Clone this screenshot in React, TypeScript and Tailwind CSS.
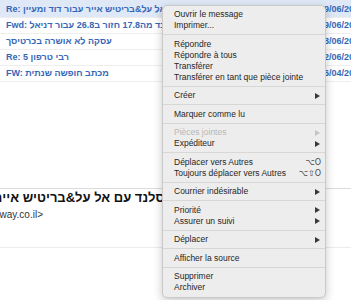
import React from "react";

type MI =
  | { sep: true }
  | { label: string; arrow?: boolean; shortcut?: string; disabled?: boolean; sep?: false };

const menu: MI[] = [
  { label: "Ouvrir le message" },
  { label: "Imprimer..." },
  { sep: true },
  { label: "Répondre" },
  { label: "Répondre à tous" },
  { label: "Transférer" },
  { label: "Transférer en tant que pièce jointe" },
  { sep: true },
  { label: "Créer", arrow: true },
  { sep: true },
  { label: "Marquer comme lu" },
  { sep: true },
  { label: "Pièces jointes", arrow: true, disabled: true },
  { label: "Expéditeur", arrow: true },
  { sep: true },
  { label: "Déplacer vers Autres", shortcut: "⌥O" },
  { label: "Toujours déplacer vers Autres", shortcut: "⌥⇧O" },
  { sep: true },
  { label: "Courrier indésirable", arrow: true },
  { sep: true },
  { label: "Priorité", arrow: true },
  { label: "Assurer un suivi", arrow: true },
  { sep: true },
  { label: "Déplacer", arrow: true },
  { sep: true },
  { label: "Afficher la source" },
  { sep: true },
  { label: "Supprimer" },
  { label: "Archiver" },
];

const rows = [
  { s: "Re: טיסה לאיסלנד עם אל על&בריטיש אייר עבור דוד ומעיין", d: "29/06/2023", sel: true },
  { s: "Fwd: טיסה לאיסלנד מה17.8 חזור ב26.8 עבור דניאל", d: "29/06/2023" },
  { s: "עסקה לא אושרה בכרטיסך", d: "28/06/2023" },
  { s: "Re: רבי טרפון 5", d: "22/06/2023" },
  { s: "FW: מכתב חופשה שנתית", d: "16/04/2023" },
];

function Arrow({ disabled }: { disabled?: boolean }) {
  return (
    <svg width="5" height="6" viewBox="0 0 5 6">
      <polygon points="0,0 5,3 0,6" fill={disabled ? "#c4c4c4" : "#3a3a3a"} />
    </svg>
  );
}

export default function App() {
  return (
    <div className="relative w-[351px] h-[300px] overflow-hidden bg-white font-['Liberation_Sans','Noto_Sans',Arial,sans-serif]">
      <div className="flex flex-col">
        {rows.map((r, i) => (
          <div
            key={i}
            className={
              "flex items-center border-b border-[#eeeeee] text-[9px] font-bold text-[#3567b8] " +
              (i === 0 ? "h-[18px] pt-[2px] bg-[#dfe8f6]" : "h-[16px]")
            }
          >
            <div className="flex-1 overflow-hidden whitespace-nowrap pl-[6px]" dir="ltr">
              {r.s}
            </div>
            <div className="w-[32px] overflow-hidden whitespace-nowrap">{r.d}</div>
          </div>
        ))}
      </div>
      <div className="h-[106px]" />
      <div className="h-px bg-[#dcdcdc]" />
      <div className="flex h-[18px] items-center">
        <div className="flex w-[243px] justify-end overflow-hidden whitespace-nowrap">
          <span dir="rtl" className="text-[13px] font-bold text-[#111111]">
            Re: טיסה לאיסלנד עם אל על&בריטיש אייר עבור דוד ומעיין
          </span>
        </div>
      </div>
      <div className="mt-[1px] flex h-[13px] items-center">
        <div className="flex w-[43px] justify-end overflow-hidden whitespace-nowrap text-[10px] text-[#333333]">
          <span>&lt;dudi@gateway.co.il&gt;</span>
        </div>
      </div>
      <div className="h-[26px]" />
      <div className="h-px bg-[#ececec]" />

      <div className="absolute left-[162px] top-[4.5px] w-[164px] rounded-[5px] border border-[#c9c9c9] bg-[#ededed] py-[3.5px] shadow-[0_3px_10px_rgba(0,0,0,0.22)]">
        {menu.map((m, i) =>
          m.sep ? (
            <div key={i} className="flex h-[7.5px] items-center">
              <div className="h-px w-full bg-[#d7d7d7]" />
            </div>
          ) : (
            <div
              key={i}
              className="flex h-[11px] items-center justify-between pl-[11px] pr-[4px] text-[8.5px] leading-[11px]"
            >
              <span className={m.disabled ? "text-[#b8b8b8]" : "text-[#262626]"}>{m.label}</span>
              {m.arrow && (
                <span className="mr-[1px] flex items-center">
                  <Arrow disabled={m.disabled} />
                </span>
              )}
              {m.shortcut && (
                <span className="font-['DejaVu_Sans',sans-serif] text-[8px] text-[#4a4a4a]">
                  {m.shortcut}
                </span>
              )}
            </div>
          )
        )}
      </div>
    </div>
  );
}
